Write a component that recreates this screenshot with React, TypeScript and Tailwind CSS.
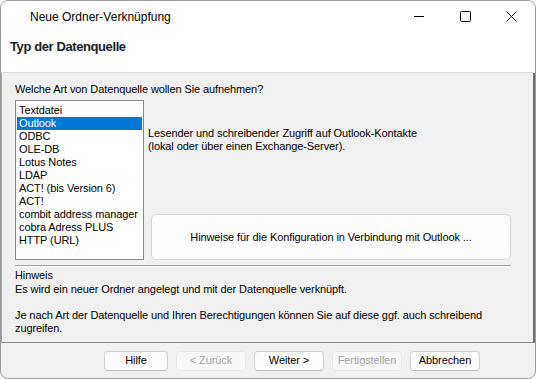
import React from "react";

const items = [
  "Textdatei",
  "Outlook",
  "ODBC",
  "OLE-DB",
  "Lotus Notes",
  "LDAP",
  "ACT! (bis Version 6)",
  "ACT!",
  "combit address manager",
  "cobra Adress PLUS",
  "HTTP (URL)",
];

function Btn({ label, w, disabled }: { label: string; w: string; disabled?: boolean }) {
  return (
    <div
      className={
        "h-[20px] rounded-[4px] border flex items-center justify-center text-[11px] tracking-[-0.1px] leading-none " +
        w +
        (disabled
          ? " bg-[#f7f7f7] border-[#e6e6e6] text-[#a3a3a3]"
          : " bg-[#fdfdfd] border-[#d0d0d0] border-b-[#bcbcbc] text-black")
      }
    >
      {label}
    </div>
  );
}

export default function App() {
  return (
    <div className="w-[536px] h-[379px] bg-white font-['Liberation_Sans',Arial,sans-serif] text-black">
      <div className="w-full h-full flex flex-col rounded-[8px] border border-[#9a9a9a] overflow-hidden bg-[#f0f0f0]">
        {/* title bar */}
        <div className="h-[30px] shrink-0 bg-white flex items-center">
          <div className="pl-[29px] text-[12px] leading-none pt-[2px]">Neue Ordner-Verknüpfung</div>
          <div className="ml-auto flex items-center h-full">
            <div className="w-[46px] flex justify-center">
              <svg width="10" height="10" viewBox="0 0 10 10">
                <path d="M0 5.5H10" stroke="#000" strokeWidth="1" />
              </svg>
            </div>
            <div className="w-[46px] flex justify-center">
              <svg width="11" height="11" viewBox="0 0 11 11">
                <rect x="0.5" y="0.5" width="10" height="10" rx="1.2" fill="none" stroke="#000" strokeWidth="1" />
              </svg>
            </div>
            <div className="w-[46px] flex justify-center mr-[1px]">
              <svg width="11" height="11" viewBox="0 0 11 11">
                <path d="M0.5 0.5L10.5 10.5M10.5 0.5L0.5 10.5" stroke="#000" strokeWidth="1" />
              </svg>
            </div>
          </div>
        </div>
        {/* header */}
        <div className="h-[42px] shrink-0 bg-white border-b border-[#dadada] flex items-center pl-[9px]">
          <div className="text-[13px] tracking-[-0.4px] font-bold text-[#1c1c28] pb-[9px]">Typ der Datenquelle</div>
        </div>
        {/* content panel */}
        <div className="h-[270px] shrink-0 border-l border-l-[#a8a8a8] border-r-2 border-r-[#6e6e6e] border-b border-b-[#8c8c8c] pl-[13px] pr-[22px] pt-[10px] text-[11px] tracking-[-0.1px] leading-[13px]">
          <div>Welche Art von Datenquelle wollen Sie aufnehmen?</div>
          <div className="flex mt-[4px]">
            <div className="w-[129px] h-[160px] shrink-0 bg-white border border-[#828790] pt-[3px] px-[1px]">
              {items.map((it, i) => (
                <div
                  key={it}
                  className={
                    "h-[13px] leading-[13px] pl-[2px] whitespace-nowrap " +
                    (i === 1 ? "bg-[#0078d7] text-white" : "")
                  }
                >
                  {it}
                </div>
              ))}
            </div>
            <div className="flex-1 flex flex-col pl-[4px]">
              <div className="mt-[27px]">
                Lesender und schreibender Zugriff auf Outlook-Kontakte
                <br />
                (lokal oder über einen Exchange-Server).
              </div>
              <div className="mt-auto ml-[3px] h-[46px] rounded-[5px] border border-[#d6d6d6] bg-[#fdfdfd] flex items-center justify-center">
                Hinweise für die Konfiguration in Verbindung mit Outlook ...
              </div>
            </div>
          </div>
          <div className="mt-[5px] h-[2px] border-t border-t-[#a0a0a0] border-b border-b-white" />
          <div className="mt-[2px]">
            <div>Hinweis</div>
            <div className="mt-[1px]">Es wird ein neuer Ordner angelegt und mit der Datenquelle verknüpft.</div>
            <div className="mt-[13px]">
              Je nach Art der Datenquelle und Ihren Berechtigungen können Sie auf diese ggf. auch schreibend
              <br />
              zugreifen.
            </div>
          </div>
        </div>
        {/* footer */}
        <div className="flex-1 flex items-center pl-[103px] gap-[8px]">
          <Btn label="Hilfe" w="w-[64px]" />
          <Btn label="< Zurück" w="w-[70px]" disabled />
          <Btn label="Weiter >" w="w-[70px]" />
          <Btn label="Fertigstellen" w="w-[70px]" disabled />
          <Btn label="Abbrechen" w="w-[70px]" />
        </div>
      </div>
    </div>
  );
}
